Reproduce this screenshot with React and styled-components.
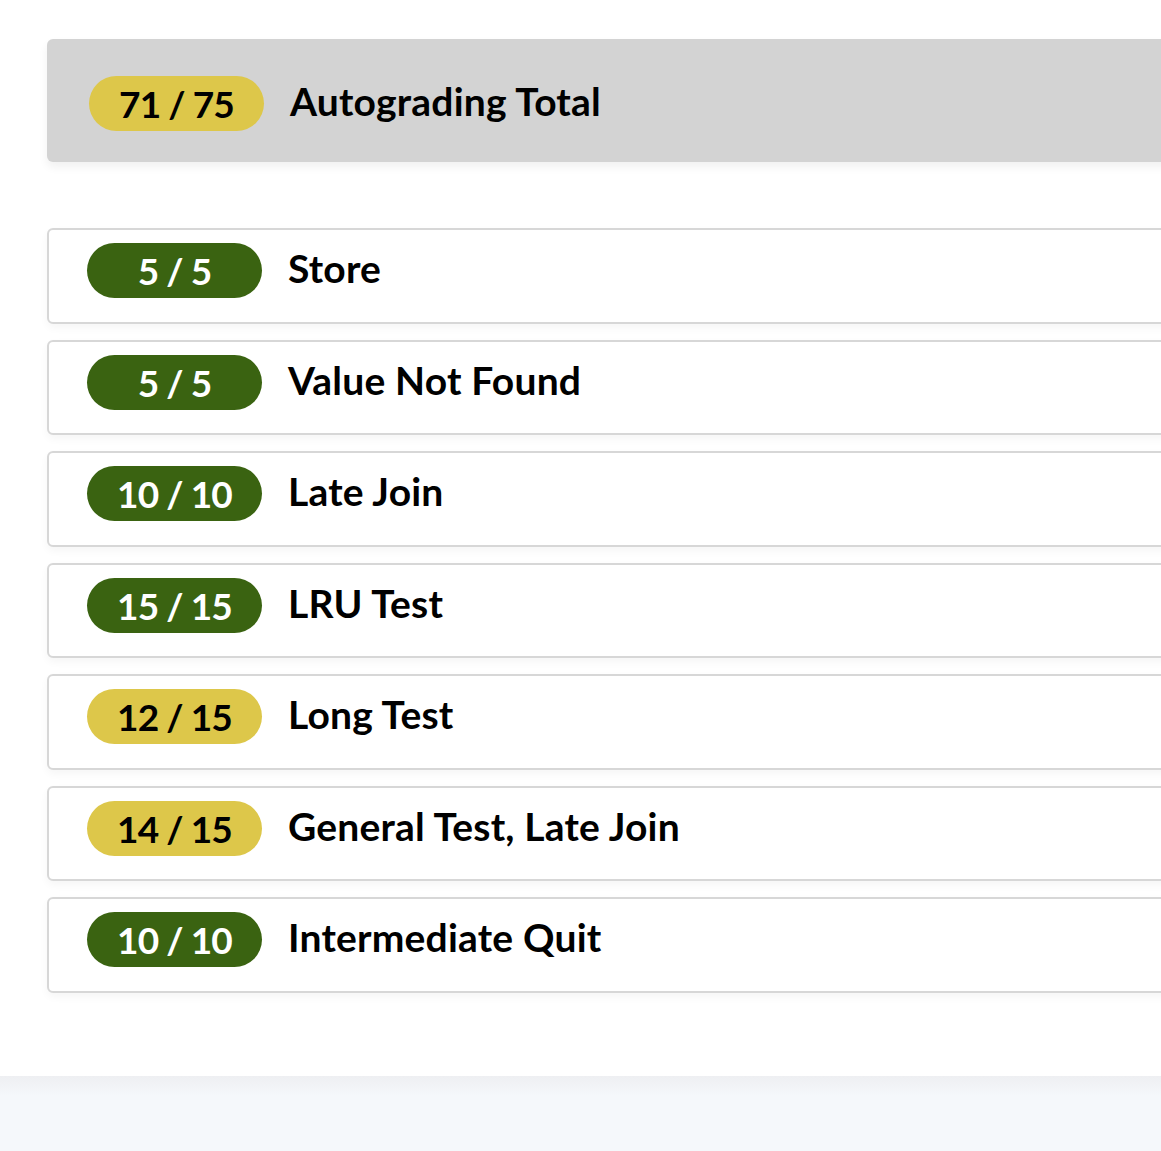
import styled, { createGlobalStyle } from 'styled-components';

const GlobalStyle = createGlobalStyle`
  html, body {
    margin: 0;
    padding: 0;
    background: #ffffff;
    overflow: hidden;
  }
  body {
    font-family: "Source Sans Pro", Lato, "Noto Sans", sans-serif;
  }
`

const Page = styled.div`
  width: 1161px;
  height: 1151px;
  display: flex;
  flex-direction: column;
  overflow: hidden;
`

const Content = styled.main`
  padding: 39px 0 0 47px;
  height: 1076px;
  box-sizing: border-box;
`

const Inner = styled.div`
  width: 1200px;
  display: flex;
  flex-direction: column;
`

const TotalCard = styled.section`
  background: #d3d3d3;
  border-radius: 6px;
  height: 123px;
  box-sizing: border-box;
  padding: 37px 0 0 42px;
  display: flex;
  align-items: flex-start;
  gap: 26px;
  box-shadow: 0 5px 10px rgba(0, 0, 0, 0.06);
  margin-bottom: 66px;
`

const TestList = styled.div`
  display: flex;
  flex-direction: column;
  gap: 16px;
`

const TestCard = styled.div`
  background: #fff;
  border: 2px solid #d7d7d7;
  border-radius: 6px;
  height: 95.5px;
  box-sizing: border-box;
  padding: 13px 0 0 38px;
  display: flex;
  align-items: flex-start;
  gap: 26px;
  box-shadow: 0 4px 8px rgba(0, 0, 0, 0.04);
`

const Score = styled.span`
  width: 175px;
  height: 55px;
  border-radius: 28px;
  display: flex;
  align-items: center;
  justify-content: center;
  background: ${p => (p.$full ? '#3a6311' : '#ddc74a')};
  color: ${p => (p.$full && !p.$total ? '#ffffff' : '#000000')};
  font-size: 37px;
  font-weight: 700;
  letter-spacing: -0.9px;
  flex-shrink: 0;
`

const Title = styled.h2`
  margin: 0;
  height: 55px;
  padding-bottom: 5px;
  box-sizing: border-box;
  display: flex;
  align-items: center;
  font-size: 39px;
  font-weight: 700;
  color: #000;
  letter-spacing: 0.2px;
`

const Footer = styled.footer`
  flex: 1;
  background: linear-gradient(#eeeff2 0px, #f5f8fb 20px, #f5f8fb 100%);
`

const tests = [
  { got: 5, max: 5, name: 'Store' },
  { got: 5, max: 5, name: 'Value Not Found' },
  { got: 10, max: 10, name: 'Late Join' },
  { got: 15, max: 15, name: 'LRU Test' },
  { got: 12, max: 15, name: 'Long Test' },
  { got: 14, max: 15, name: 'General Test, Late Join' },
  { got: 10, max: 10, name: 'Intermediate Quit' },
]

export default function App() {
  return (
    <>
      <GlobalStyle />
      <Page>
        <Content>
          <Inner>
            <TotalCard>
              <Score $total>71 / 75</Score>
              <Title>Autograding Total</Title>
            </TotalCard>
            <TestList>
              {tests.map(t => (
                <TestCard key={t.name}>
                  <Score $full={t.got === t.max}>{t.got} / {t.max}</Score>
                  <Title>{t.name}</Title>
                </TestCard>
              ))}
            </TestList>
          </Inner>
        </Content>
        <Footer />
      </Page>
    </>
  );
}
